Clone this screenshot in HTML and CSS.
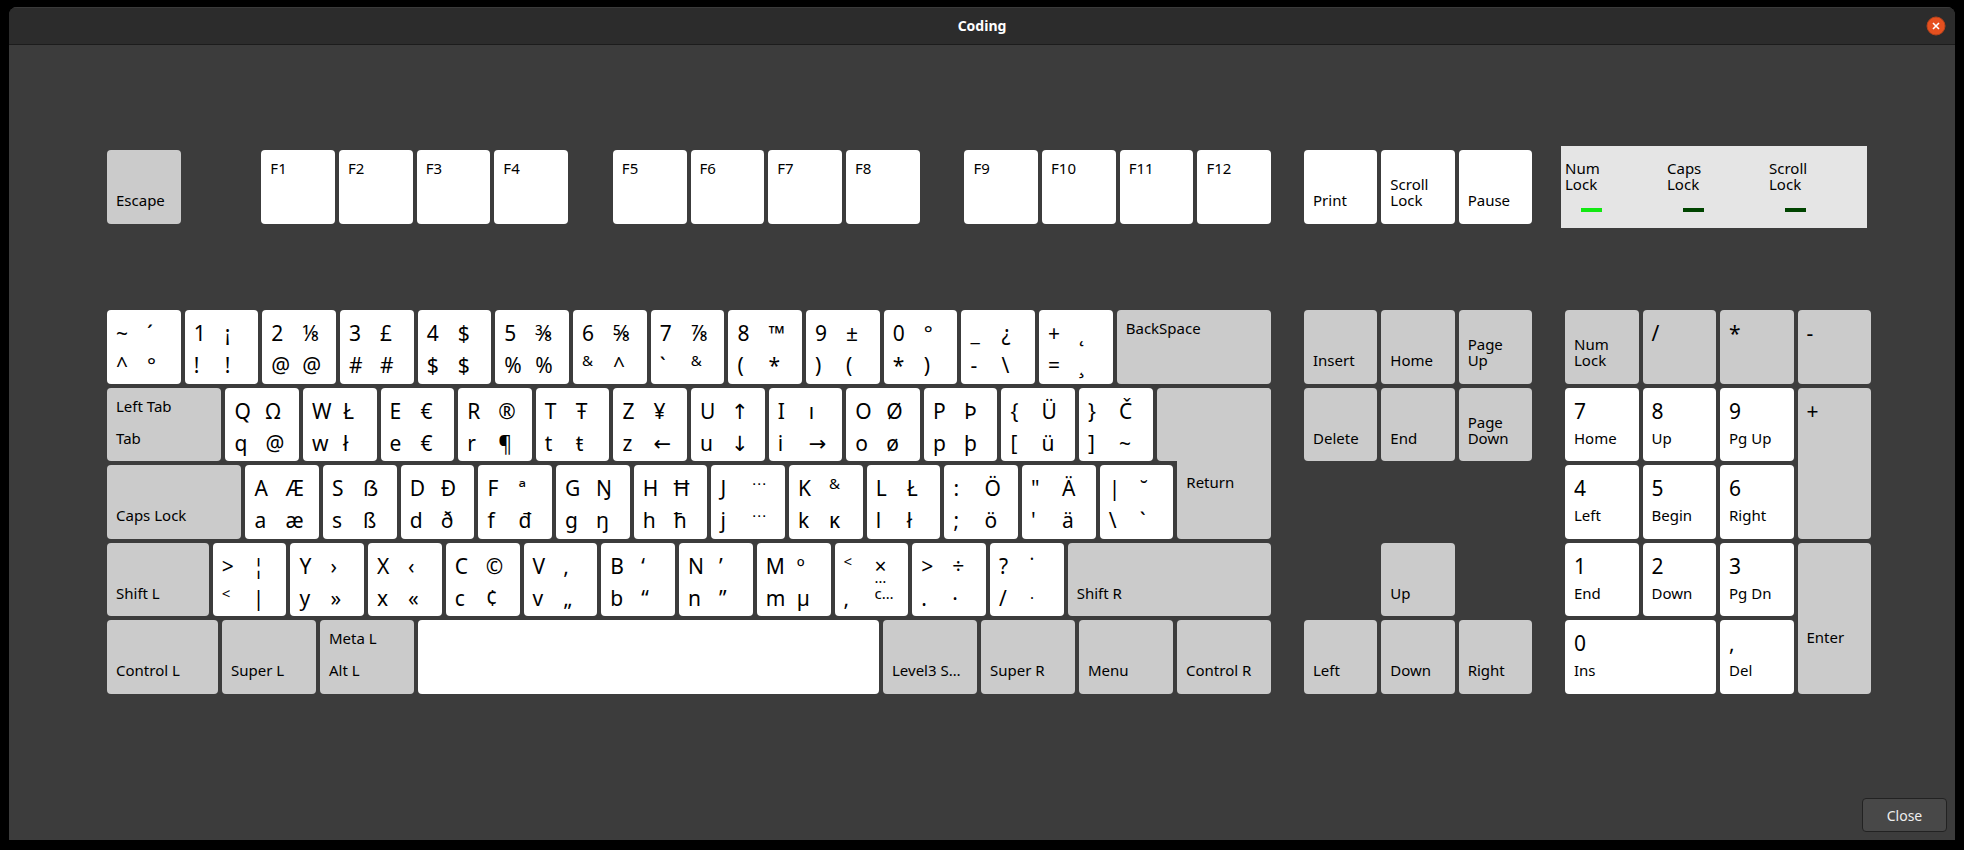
FILE: index.html
```
<!DOCTYPE html>
<html lang="en">
<head>
    <meta charset="UTF-8">
    <meta name="viewport" content="width=device-width, initial-scale=1.0">
    <title>Coding</title>
    <link rel="stylesheet" href="styles.css">
</head>
<body>
    <div class="window">
        <header class="titlebar">
            <h1>Coding</h1>
            <button class="close-icon" type="button" aria-label="Close window">
                <svg viewBox="0 0 20 20" width="20" height="20">
                    <circle cx="10" cy="10" r="9" fill="#e5501f" stroke="#b8441c"/>
                    <path d="M7 7l6 6M13 7l-6 6" stroke="#fff" stroke-width="1.6" fill="none"/>
                </svg>
            </button>
        </header>

        <main class="keyboard">
            <!-- Function row -->
            <div class="row function">
                <button class="key mod"><small class="low">Escape</small></button>
                <span class="space-esc"></span>
                <button class="key"><small class="high">F1</small></button>
                <button class="key"><small class="high">F2</small></button>
                <button class="key"><small class="high">F3</small></button>
                <button class="key"><small class="high">F4</small></button>
                <span class="space-f"></span>
                <button class="key"><small class="high">F5</small></button>
                <button class="key"><small class="high">F6</small></button>
                <button class="key"><small class="high">F7</small></button>
                <button class="key"><small class="high">F8</small></button>
                <span class="space-f"></span>
                <button class="key"><small class="high">F9</small></button>
                <button class="key"><small class="high">F10</small></button>
                <button class="key"><small class="high">F11</small></button>
                <button class="key"><small class="high">F12</small></button>
            </div>
            <div class="row system">
                <button class="key"><small class="low">Print</small></button>
                <button class="key"><small class="low">Scroll<br>Lock</small></button>
                <button class="key"><small class="low">Pause</small></button>
            </div>
            <div class="leds">
                <div class="led on">Num<br>Lock</div>
                <div class="led">Caps<br>Lock</div>
                <div class="led">Scroll<br>Lock</div>
            </div>

            <!-- Main block -->
            <div class="block letters">
                <div class="row">
                    <button class="key"><span>~</span><span>´</span><span>^</span><span>°</span></button>
                    <button class="key"><span>1</span><span>¡</span><span>!</span><span>!</span></button>
                    <button class="key"><span>2</span><span>⅛</span><span>@</span><span>@</span></button>
                    <button class="key"><span>3</span><span>£</span><span>#</span><span>#</span></button>
                    <button class="key"><span>4</span><span>$</span><span>$</span><span>$</span></button>
                    <button class="key"><span>5</span><span>⅜</span><span>%</span><span>%</span></button>
                    <button class="key"><span>6</span><span>⅝</span><small>&amp;</small><span>^</span></button>
                    <button class="key"><span>7</span><span>⅞</span><span>`</span><small>&amp;</small></button>
                    <button class="key"><span>8</span><span>™</span><span>(</span><span>*</span></button>
                    <button class="key"><span>9</span><span>±</span><span>)</span><span>(</span></button>
                    <button class="key"><span>0</span><span>°</span><span>*</span><span>)</span></button>
                    <button class="key"><span>_</span><span>¿</span><span>-</span><span>\</span></button>
                    <button class="key"><span>+</span><span>˛</span><span>=</span><span>¸</span></button>
                    <button class="key mod backspace"><small class="high">BackSpace</small></button>
                </div>
                <div class="row">
                    <button class="key mod tab"><small class="high">Left Tab</small><small class="low">Tab</small></button>
                    <button class="key"><span>Q</span><span>Ω</span><span>q</span><span>@</span></button>
                    <button class="key"><span>W</span><span>Ł</span><span>w</span><span>ł</span></button>
                    <button class="key"><span>E</span><span>€</span><span>e</span><span>€</span></button>
                    <button class="key"><span>R</span><span>®</span><span>r</span><span>¶</span></button>
                    <button class="key"><span>T</span><span>Ŧ</span><span>t</span><span>ŧ</span></button>
                    <button class="key"><span>Z</span><span>¥</span><span>z</span><span>←</span></button>
                    <button class="key"><span>U</span><span>↑</span><span>u</span><span>↓</span></button>
                    <button class="key"><span>I</span><span>ı</span><span>i</span><span>→</span></button>
                    <button class="key"><span>O</span><span>Ø</span><span>o</span><span>ø</span></button>
                    <button class="key"><span>P</span><span>Þ</span><span>p</span><span>þ</span></button>
                    <button class="key"><span>{</span><span>Ü</span><span>[</span><span>ü</span></button>
                    <button class="key"><span>}</span><span>Č</span><span>]</span><span>~</span></button>
                    <button class="key mod return"><span class="leg"><small class="low">Return</small></span></button>
                </div>
                <div class="row">
                    <button class="key mod caps"><small class="low">Caps Lock</small></button>
                    <button class="key"><span>A</span><span>Æ</span><span>a</span><span>æ</span></button>
                    <button class="key"><span>S</span><span>ẞ</span><span>s</span><span>ß</span></button>
                    <button class="key"><span>D</span><span>Ð</span><span>d</span><span>ð</span></button>
                    <button class="key"><span>F</span><span>ª</span><span>f</span><span>đ</span></button>
                    <button class="key"><span>G</span><span>Ŋ</span><span>g</span><span>ŋ</span></button>
                    <button class="key"><span>H</span><span>Ħ</span><span>h</span><span>ħ</span></button>
                    <button class="key"><span>J</span><small>⋯</small><span>j</span><small>⋯</small></button>
                    <button class="key"><span>K</span><small>&amp;</small><span>k</span><span>ĸ</span></button>
                    <button class="key"><span>L</span><span>Ł</span><span>l</span><span>ł</span></button>
                    <button class="key"><span>:</span><span>Ö</span><span>;</span><span>ö</span></button>
                    <button class="key"><span>"</span><span>Ä</span><span>'</span><span>ä</span></button>
                    <button class="key"><span>|</span><span>˘</span><span>\</span><span>`</span></button>
                    <span class="space-leg"></span>
                </div>
                <div class="row">
                    <button class="key mod shift-l"><small class="low">Shift L</small></button>
                    <button class="key"><span>&gt;</span><span>¦</span><small>&lt;</small><span>|</span></button>
                    <button class="key"><span>Y</span><span>›</span><span>y</span><span>»</span></button>
                    <button class="key"><span>X</span><span>‹</span><span>x</span><span>«</span></button>
                    <button class="key"><span>C</span><span>©</span><span>c</span><span>¢</span></button>
                    <button class="key"><span>V</span><span>‚</span><span>v</span><span>„</span></button>
                    <button class="key"><span>B</span><span>‘</span><span>b</span><span>“</span></button>
                    <button class="key"><span>N</span><span>’</span><span>n</span><span>”</span></button>
                    <button class="key"><span>M</span><span>º</span><span>m</span><span>µ</span></button>
                    <button class="key"><small>&lt;</small><span>×</span><span>,</span><small>…<br>c…</small></button>
                    <button class="key"><span>&gt;</span><span>÷</span><span>.</span><span>·</span></button>
                    <button class="key"><span>?</span><span>˙</span><span>/</span><small>.</small></button>
                    <button class="key mod shift-r"><small class="low">Shift R</small></button>
                </div>
                <div class="row">
                    <button class="key mod control-l"><small class="low">Control L</small></button>
                    <button class="key mod wide"><small class="low">Super L</small></button>
                    <button class="key mod wide"><small class="high">Meta L</small><small class="low">Alt L</small></button>
                    <button class="key spacebar" aria-label="Space"></button>
                    <button class="key mod wide"><small class="low">Level3 S…</small></button>
                    <button class="key mod wide"><small class="low">Super R</small></button>
                    <button class="key mod wide"><small class="low">Menu</small></button>
                    <button class="key mod wide"><small class="low">Control R</small></button>
                </div>
            </div>

            <!-- Navigation block -->
            <div class="block nav">
                <button class="key mod"><small class="low">Insert</small></button>
                <button class="key mod"><small class="low">Home</small></button>
                <button class="key mod"><small class="low">Page<br>Up</small></button>
                <button class="key mod"><small class="low">Delete</small></button>
                <button class="key mod"><small class="low">End</small></button>
                <button class="key mod"><small class="low">Page<br>Down</small></button>
                <button class="key mod arrow-up"><small class="low">Up</small></button>
                <button class="key mod arrow-left"><small class="low">Left</small></button>
                <button class="key mod arrow-down"><small class="low">Down</small></button>
                <button class="key mod arrow-right"><small class="low">Right</small></button>
            </div>

            <!-- Numeric keypad -->
            <div class="block numpad">
                <button class="key mod"><small class="low">Num<br>Lock</small></button>
                <button class="key mod"><span>/</span></button>
                <button class="key mod"><span>*</span></button>
                <button class="key mod"><span>-</span></button>
                <button class="key"><span>7</span><small class="low">Home</small></button>
                <button class="key"><span>8</span><small class="low">Up</small></button>
                <button class="key"><span>9</span><small class="low">Pg Up</small></button>
                <button class="key mod tall"><span>+</span></button>
                <button class="key"><span>4</span><small class="low">Left</small></button>
                <button class="key"><span>5</span><small class="low">Begin</small></button>
                <button class="key"><span>6</span><small class="low">Right</small></button>
                <button class="key"><span>1</span><small class="low">End</small></button>
                <button class="key"><span>2</span><small class="low">Down</small></button>
                <button class="key"><span>3</span><small class="low">Pg Dn</small></button>
                <button class="key mod tall"><small class="low">Enter</small></button>
                <button class="key zero"><span>0</span><small class="low">Ins</small></button>
                <button class="key"><span>,</span><small class="low">Del</small></button>
            </div>
        </main>

        <footer class="actions">
            <button class="close-button" type="button">Close</button>
        </footer>
    </div>
</body>
</html>
```

FILE: styles.css
```
* {
    box-sizing: border-box;
}
body {
    margin: 0;
    padding: 7px 9px 10px;
    min-height: 100vh;
    display: flex;
    background: #000;
    font-family: "Noto Sans", "DejaVu Sans", sans-serif;
}
button {
    font-family: inherit;
}

/* Window frame */
.window {
    flex: 1;
    display: flex;
    flex-direction: column;
    background: #3c3c3c;
    border-radius: 8px 8px 0 0;
    overflow: hidden;
}
.titlebar {
    height: 38px;
    display: grid;
    grid-template-columns: 1fr auto 1fr;
    align-items: center;
    padding: 0 9px;
    background: #2c2c2c;
    border-top: 1px solid #3a3a3a;
    border-bottom: 1px solid #1c1c1c;
}
.titlebar h1 {
    grid-column: 2;
    margin: 0;
    font-size: 14px;
    line-height: 20px;
    color: #fff;
}
.close-icon {
    justify-self: end;
    display: flex;
    padding: 0;
    border: 0;
    background: none;
}

/* Keyboard layout, column widths follow the key units */
.keyboard {
    flex: 1;
    display: grid;
    grid-template-columns: 1164fr 228fr 306fr;
    grid-template-rows: 74px 384px;
    gap: 86px 33px;
    padding: 105px 84px 0 98px;
}
.row {
    display: flex;
    gap: 4px;
}
.row .key {
    flex: 74 1 0;
}
.block {
    display: grid;
    grid-template-rows: repeat(5, minmax(0, 1fr));
    gap: 4px;
}
.nav {
    grid-template-columns: repeat(3, 1fr);
}
.numpad {
    grid-template-columns: repeat(4, 1fr);
}

/* Keys */
.key {
    display: grid;
    grid-template-columns: 31px 1fr;
    grid-template-rows: 32px 32px;
    align-content: start;
    min-width: 0;
    padding: 7px 0 0;
    border: 0;
    border-radius: 4px;
    background: #fff;
    color: #000;
    font-size: 21px;
    line-height: 32px;
    text-align: left;
    white-space: nowrap;
}
.key span, .key small {
    padding-left: 9px;
}
.key small {
    align-self: end;
    margin-bottom: 13px;
    font-size: 15px;
    line-height: 16px;
}
.key .high {
    grid-area: 1 / 1 / 2 / 3;
}
.key .low {
    grid-area: 2 / 1 / 3 / 3;
}
.mod {
    background: #cbcbcb;
}

/* Key widths */
.space-esc {
    flex: 73 1 0;
}
.space-f {
    flex: 37 1 0;
}
.row .backspace {
    flex-grow: 155;
}
.row .tab, .row .return {
    flex-grow: 115;
}
.row .caps {
    flex-grow: 135;
}
.space-leg {
    flex: 94 1 0;
}
.row .shift-l {
    flex-grow: 102;
}
.row .shift-r {
    flex-grow: 204;
}
.row .control-l {
    flex-grow: 111;
}
.row .wide {
    flex-grow: 94;
}
.row .spacebar {
    flex-grow: 461;
}

/* Return reaches down into the row below */
.return {
    position: relative;
}
.key .leg {
    position: absolute;
    top: 0;
    right: 0;
    display: grid;
    width: 82%;
    height: calc(200% + 4px);
    padding: 7px 0 0;
    border-radius: 4px;
    background: #cbcbcb;
}
.key .leg, .tall {
    grid-template-rows: 32px 76px;
    align-content: start;
}

.tall {
    grid-row: span 2;
}
.zero {
    grid-column: span 2;
}
.arrow-up {
    grid-area: 4 / 2;
}
.arrow-left {
    grid-area: 5 / 1;
}
.arrow-down {
    grid-area: 5 / 2;
}
.arrow-right {
    grid-area: 5 / 3;
}

/* Indicators */
.leds {
    display: grid;
    grid-template-columns: repeat(3, 1fr);
    margin: -4px 4px -4px -4px;
    padding-top: 14px;
    background: #e5e5e5;
}
.led {
    padding-left: 4px;
    font-size: 15px;
    line-height: 16px;
    color: #000;
}
.led::after {
    content: "";
    display: block;
    width: 21px;
    height: 4px;
    margin: 16px 0 0 16px;
    background: #004400;
}
.led.on::after {
    background: #12e812;
}

.actions {
    display: flex;
    justify-content: flex-end;
    padding: 8px;
}
.close-button {
    width: 85px;
    height: 34px;
    border: 1px solid #222;
    border-radius: 4px;
    background: #484848;
    color: #eee;
    font-size: 14px;
}
```
